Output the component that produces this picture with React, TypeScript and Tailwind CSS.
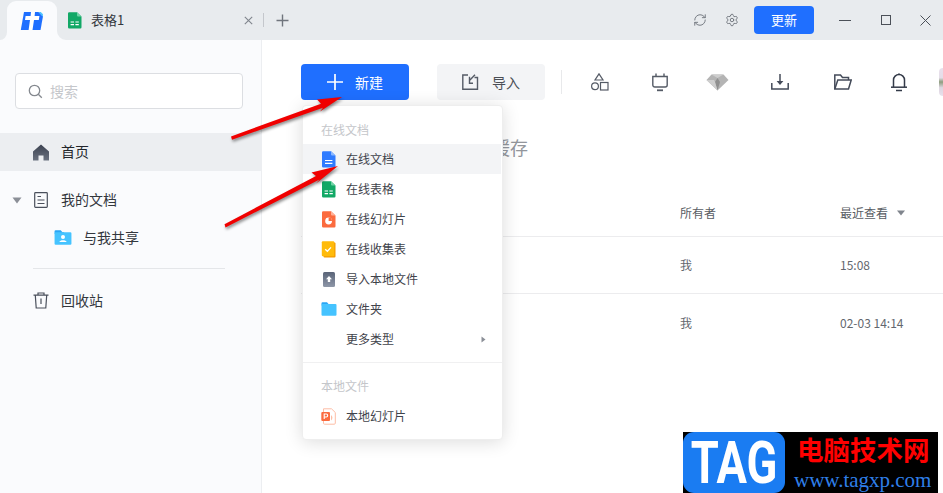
import React from "react";
import { RefreshCw, Settings } from "lucide-react";

const FONT = '"Noto Sans CJK SC", "Liberation Sans", sans-serif';

function AppLogo() {
  return (
    <svg width="24" height="20" viewBox="0 0 24 20">
      <path d="M4 1H18.5L23 5.2L20.5 19H0.8Z" fill="#1f6fff" />
      <path d="M18.5 1H20.8L23 3.2L22.6 5.8Z" fill="#4cc3ff" />
      <path d="M11 1H15L14.6 5H19.4L18.8 9H14L12.5 19H8.6L10 9H5L5.6 5H10.6Z" fill="#fff" />
    </svg>
  );
}

function DocShape({ color, light, children }: { color: string; light: string; children?: React.ReactNode }) {
  return (
    <svg width="15" height="17" viewBox="0 0 15 17">
      <path d="M1 1.5A1.2 1.2 0 0 1 2.2 0.3H10L14.5 4.5V15.3A1.2 1.2 0 0 1 13.3 16.5H2.2A1.2 1.2 0 0 1 1 15.3Z" fill={color} />
      <path d="M10 0.3L14.5 4.5H11A1 1 0 0 1 10 3.5Z" fill={light} />
      {children}
    </svg>
  );
}

function SheetIcon() {
  return (
    <DocShape color="#12a866" light="#6fd3a5">
      <path d="M3.6 10H7M8.4 10H11.8M3.6 12.6H7M8.4 12.6H11.8" stroke="#fff" strokeWidth="1.2" />
    </DocShape>
  );
}

function WordIcon() {
  return (
    <DocShape color="#2f7bff" light="#8bb8ff">
      <path d="M4 9.5H11.4M4 12.3H11.4" stroke="#fff" strokeWidth="1.2" />
    </DocShape>
  );
}

function SlideIcon() {
  return (
    <DocShape color="#fb6b3f" light="#ffb199">
      <circle cx="7.6" cy="10" r="3.4" fill="#fff" />
      <path d="M7.6 10V6.6A3.4 3.4 0 0 1 11 10Z" fill="#fb6b3f" />
    </DocShape>
  );
}

function FormIcon() {
  return (
    <svg width="15" height="17" viewBox="0 0 15 17">
      <rect x="2.5" y="1.5" width="12" height="15" rx="1" fill="#f49b00" />
      <rect x="0.8" y="0.3" width="12.5" height="15" rx="1" fill="#ffbb0b" />
      <path d="M4.2 8.2L6.4 10.3L10 6.4" fill="none" stroke="#fff" strokeWidth="1.3" />
    </svg>
  );
}

function ImportFileIcon() {
  return (
    <svg width="15" height="17" viewBox="0 0 15 17">
      <defs>
        <linearGradient id="imp" x1="0" y1="0" x2="0" y2="1">
          <stop offset="0" stopColor="#5a6478" />
          <stop offset="1" stopColor="#8e97a8" />
        </linearGradient>
      </defs>
      <rect x="2" y="1" width="12" height="15" rx="1.5" fill="url(#imp)" />
      <path d="M8 5L11 8.2H9.2V11H6.8V8.2H5Z" fill="#fff" />
    </svg>
  );
}

function FolderIcon({ w = 16, h = 14, children }: { w?: number; h?: number; children?: React.ReactNode }) {
  return (
    <svg width={w} height={h} viewBox="0 0 16 14" preserveAspectRatio="none">
      <path d="M0.5 1.2A1 1 0 0 1 1.5 0.2H6L7.5 2H9V3.5H0.5Z" fill="#2aa6f5" />
      <path d="M0.5 3A1 1 0 0 1 1.5 2H14.5A1 1 0 0 1 15.5 3V12.8A1 1 0 0 1 14.5 13.8H1.5A1 1 0 0 1 0.5 12.8Z" fill="#45c3ff" />
      {children}
    </svg>
  );
}

function LocalPptIcon() {
  return (
    <svg width="15" height="17" viewBox="0 0 15 17">
      <path d="M2.5 0.8H10.5L14.3 4.5V15.2A1 1 0 0 1 13.3 16.2H3.5A1 1 0 0 1 2.5 15.2Z" fill="#fff" stroke="#fdbda5" strokeWidth="1" />
      <path d="M10 7A3.4 3.4 0 0 1 10 12.5Z" fill="#fdbda5" />
      <rect x="0.3" y="4" width="8.7" height="9" rx="1" fill="#fb6b3f" />
      <path d="M3.2 11V6H5.2A1.5 1.5 0 0 1 5.2 9H3.2" fill="none" stroke="#fff" strokeWidth="1.1" />
    </svg>
  );
}

function MenuRow({ icon, label, active, arrow }: { icon?: React.ReactNode; label: string; active?: boolean; arrow?: boolean }) {
  return (
    <div className={`flex h-[30px] w-[198px] items-center pl-[18px] ${active ? "bg-[#f3f4f6]" : ""}`}>
      <span className="flex w-[25px] shrink-0 items-center">{icon}</span>
      <span className="text-[12px] text-[#3f434b]">{label}</span>
      {arrow && (
        <svg className="ml-auto mr-[15px]" width="5" height="7" viewBox="0 0 5 7">
          <path d="M0.5 0.5L4.5 3.5L0.5 6.5Z" fill="#8b8f97" />
        </svg>
      )}
    </div>
  );
}

export default function App() {
  return (
    <div className="relative flex h-[493px] w-[943px] flex-col overflow-hidden bg-white" style={{ fontFamily: FONT }}>
      {/* Title bar */}
      <header className="flex h-10 shrink-0 items-center bg-[#e8ebee]">
        <div className="relative ml-[7px] flex h-[39px] w-[50px] items-center justify-center self-end rounded-t-[9px] bg-[#fafbfd]">
          <AppLogo />
          <span className="absolute -left-[7px] bottom-0 h-[8px] w-[7px] bg-[#fafbfd] [clip-path:path('M7_0A7_8_0_0_1_0_8H7Z')]" />
          <span className="absolute -right-[9px] bottom-0 h-[9px] w-[9px] bg-[#fafbfd] [clip-path:path('M0_0A9_9_0_0_0_9_9H0Z')]" />
        </div>
        <div className="ml-[10px] flex items-center">
          <SheetIcon />
        </div>
        <span className="ml-[9px] w-[153px] text-[13px] text-[#33373d]">表格1</span>
        <svg className="mr-[10px]" width="9" height="9" viewBox="0 0 9 9">
          <path d="M0.8 0.8L8.2 8.2M8.2 0.8L0.8 8.2" stroke="#80858d" strokeWidth="1.1" />
        </svg>
        <span className="h-[14px] w-[1px] bg-[#c4c7cc]" />
        <svg className="ml-[12px]" width="13" height="13" viewBox="0 0 13 13">
          <path d="M6.5 0.5V12.5M0.5 6.5H12.5" stroke="#70757d" strokeWidth="1.4" />
        </svg>
        <div className="ml-auto flex items-center">
          <RefreshCw size={14} strokeWidth={1.6} color="#70757d" />
          <span className="ml-[18px] flex">
            <Settings size={14} strokeWidth={1.6} color="#70757d" />
          </span>
          <button className="ml-[15px] h-7 w-[60px] rounded-[4px] bg-[#1f6fff] text-[13px] text-white">更新</button>
          <span className="ml-[25px] h-[1px] w-[12px] bg-[#4b5058]" />
          <span className="ml-[30px] h-[10px] w-[10px] border border-[#4b5058]" />
          <svg className="ml-[29px] mr-[12px]" width="11" height="11" viewBox="0 0 11 11">
            <path d="M0.5 0.5L10.5 10.5M10.5 0.5L0.5 10.5" stroke="#4b5058" strokeWidth="1" />
          </svg>
        </div>
      </header>

      <div className="flex min-h-0 flex-1">
        {/* Sidebar */}
        <aside className="w-[262px] shrink-0 border-r border-[#eceef1] bg-[#fafbfd]">
          <div className="mx-[15px] mt-[33px] flex h-9 w-[228px] items-center rounded-[4px] border border-[#dcdee2] bg-white pl-[12px]">
            <svg width="15" height="15" viewBox="0 0 15 15" fill="none" stroke="#85898f" strokeWidth="1.3">
              <circle cx="6.5" cy="6.5" r="5.2" />
              <path d="M10.3 10.3L13.8 13.8" />
            </svg>
            <span className="ml-[7px] text-[14px] text-[#c5c7cb]">搜索</span>
          </div>
          <div className="mt-[24px] flex h-[38px] items-center bg-[#eceef1] pl-[33px]">
            <svg width="16" height="17" viewBox="0 0 16 17">
              <defs>
                <linearGradient id="home" x1="0" y1="0" x2="0" y2="1">
                  <stop offset="0" stopColor="#3b4150" />
                  <stop offset="1" stopColor="#6b7280" />
                </linearGradient>
              </defs>
              <path d="M8 0.5L16 7.5V16.5H10.5V11.5H5.5V16.5H0V7.5Z" fill="url(#home)" />
            </svg>
            <span className="ml-[12px] pb-[2px] text-[14px] text-[#23262b]">首页</span>
          </div>
          <div className="mt-[10px] flex h-[38px] items-center pl-[12px]">
            <svg width="10" height="7" viewBox="0 0 10 7">
              <path d="M0.5 0.5H9.5L5 6.5Z" fill="#8b8f97" />
            </svg>
            <svg className="ml-[12px]" width="14" height="16" viewBox="0 0 14 16" fill="none" stroke="#4a505c" strokeWidth="1.2">
              <rect x="0.7" y="0.7" width="12.6" height="14.6" rx="0.8" />
              <path d="M3.5 4.5H7M3.5 8H10.5M3.5 11.5H10.5" />
            </svg>
            <span className="ml-[13px] pb-[2px] text-[14px] text-[#33373d]">我的文档</span>
          </div>
          <div className="flex h-[37px] items-center pl-[54px]">
            <FolderIcon w={18} h={15}>
              <circle cx="8" cy="6.5" r="1.8" fill="#fff" />
              <path d="M4.8 11.2C5 9 11 9 11.2 11.2Z" fill="#fff" />
            </FolderIcon>
            <span className="ml-[11px] text-[14px] text-[#33373d]">与我共享</span>
          </div>
          <div className="ml-[33px] mt-[12px] h-[1px] w-[192px] bg-[#e4e6e9]" />
          <div className="mt-[12px] flex h-[38px] items-center pl-[33px]">
            <svg width="16" height="17" viewBox="0 0 16 17" fill="none" stroke="#4a505c" strokeWidth="1.2">
              <path d="M0.5 3.2H15.5M5 3V1H11V3M2.3 3.2L3.2 16H12.8L13.7 3.2M8 6.5V12" />
            </svg>
            <span className="ml-[12px] text-[14px] text-[#33373d]">回收站</span>
          </div>
        </aside>

        {/* Main */}
        <main className="min-w-0 flex-1 overflow-hidden">
          <div className="ml-[39px] mt-[24px] flex h-9 items-center">
            <button className="flex h-9 w-[108px] shrink-0 items-center justify-center rounded-[4px] bg-[#1f6fff] text-[14px] text-white">
              <svg width="16" height="16" viewBox="0 0 16 16">
                <path d="M8 0V16M0 8H16" stroke="#fff" strokeWidth="1.7" />
              </svg>
              <span className="ml-[12px]">新建</span>
            </button>
            <button className="ml-[28px] flex h-9 w-[108px] shrink-0 items-center justify-center rounded-[4px] bg-[#f3f4f6] text-[14px] text-[#4a4e55]">
              <svg width="17" height="16" viewBox="0 0 17 16" fill="none" stroke="#555b66" strokeWidth="1.4">
                <path d="M6 1H0.8V15.2H15.5V3.5H12.5" />
                <path d="M13 0.8L7.5 6.5V2.8M7.5 6.5V9.2H11" />
              </svg>
              <span className="ml-[13px]">导入</span>
            </button>
            <span className="ml-[16px] h-[24px] w-[1px] shrink-0 bg-[#e8e9eb]" />
            <span className="ml-[26px] flex w-[24px] shrink-0 justify-center">
              <svg width="18" height="19" viewBox="0 0 18 19" fill="none" stroke="#555b66" strokeWidth="1.2">
                <path d="M8 0.8L12 7H4Z" />
                <circle cx="4" cy="13.2" r="3.4" />
                <rect x="9.5" y="9.5" width="7.5" height="7.5" />
              </svg>
            </span>
            <span className="ml-[36px] flex w-[24px] shrink-0 justify-center">
              <svg width="16" height="19" viewBox="0 0 16 19" fill="none" stroke="#555b66" strokeWidth="1.4">
                <path d="M4 0.5V4M12 0.5V4" />
                <path d="M0.8 3.5H15.2V12A2 2 0 0 1 13.2 14H2.8A2 2 0 0 1 0.8 12Z" />
                <path d="M5 17.3H11" strokeWidth="1.8" />
              </svg>
            </span>
            <span className="ml-[33px] flex w-[24px] shrink-0 justify-center">
              <svg width="23" height="17" viewBox="0 0 23 17">
                <path d="M5.5 0.5H17.5L22.5 6L11.5 16.5L0.5 6Z" fill="#b4b4b4" />
                <path d="M11.5 4L14 8L11.5 16.5L9 8Z" fill="#8f8f8f" />
                <path d="M5.5 0.5L11.5 4L17.5 0.5ZM0.5 6H8L9 8L11.5 16.5Z" fill="#cecece" />
              </svg>
            </span>
            <span className="ml-[39px] flex w-[24px] shrink-0 justify-center">
              <svg width="18" height="16" viewBox="0 0 18 16" fill="none" stroke="#444b59" strokeWidth="1.5">
                <path d="M9 0V9.5" />
                <path d="M5.6 7H12.4L9 11Z" fill="#444b59" strokeWidth="0" />
                <path d="M0.8 9V15H17.2V9" />
              </svg>
            </span>
            <span className="ml-[39px] flex w-[24px] shrink-0 justify-center">
              <svg width="18" height="16" viewBox="0 0 18 16" fill="none" stroke="#444b59" strokeWidth="1.5">
                <path d="M0.8 15V1H6.5L8.5 3.5H14.5V6" />
                <path d="M0.8 15L3.8 6H17.2L14.5 15Z" />
              </svg>
            </span>
            <span className="ml-[32px] flex w-[24px] shrink-0 justify-center">
              <svg width="16" height="19" viewBox="0 0 16 19" fill="none" stroke="#333a48" strokeWidth="1.5">
                <path d="M0 14.2H16" />
                <path d="M2.5 14V7A5.5 5.5 0 0 1 13.5 7V14" />
                <path d="M8 0.5V1.5M5 17.6H11" />
              </svg>
            </span>
            <span className="ml-[28px] h-[28px] w-[16px] shrink-0 rounded-[4px] [background-image:linear-gradient(180deg,#e9e0ec_0%,#e4dde8_35%,#8e9d7e_50%,#dcd6e0_70%,#e9e0ec_100%)]" />
          </div>

          <h2 className="ml-[194px] mt-[35px] text-[18px] font-normal leading-[24px] text-[#93969c]">本地缓存</h2>

          <div className="ml-[39px] mt-[42px] flex h-[36px] items-center border-b border-[#ececee] pb-[11px] text-[12px] text-[#595d64]">
            <span className="w-[379px]" />
            <span className="w-[160px]">所有者</span>
            <span>最近查看</span>
            <svg className="ml-[9px]" width="8" height="6" viewBox="0 0 8 6">
              <path d="M0 0.5H8L4 5.5Z" fill="#80858d" />
            </svg>
          </div>
          <div className="ml-[39px] flex h-[57px] items-center border-b border-[#ececee] text-[12px] text-[#63676e]">
            <span className="w-[379px]" />
            <span className="w-[160px]">我</span>
            <span>15:08</span>
          </div>
          <div className="ml-[39px] flex h-[57px] items-center text-[12px] text-[#63676e]">
            <span className="w-[379px]" />
            <span className="w-[160px]">我</span>
            <span>02-03 14:14</span>
          </div>
        </main>
      </div>

      {/* Dropdown menu */}
      <div className="absolute left-[302px] top-[105px] w-[201px] rounded-[4px] border border-[#eeeeee] bg-white pt-[14px] pb-2 shadow-[0_2px_18px_rgba(0,0,0,0.14)]">
        <div className="flex h-5 items-center pl-[18px] text-[12px] text-[#c4c6ca]">在线文档</div>
        <div className="mt-1">
          <MenuRow active icon={<WordIcon />} label="在线文档" />
          <MenuRow icon={<SheetIcon />} label="在线表格" />
          <MenuRow icon={<SlideIcon />} label="在线幻灯片" />
          <MenuRow icon={<FormIcon />} label="在线收集表" />
          <MenuRow icon={<ImportFileIcon />} label="导入本地文件" />
          <MenuRow icon={<FolderIcon />} label="文件夹" />
          <MenuRow label="更多类型" arrow />
        </div>
        <div className="mt-2 h-[1px] bg-[#f0f0f1]" />
        <div className="mt-[13px] flex h-5 items-center pl-[18px] text-[12px] text-[#c4c6ca]">本地文件</div>
        <div className="mt-[5px]">
          <MenuRow icon={<LocalPptIcon />} label="本地幻灯片" />
        </div>
      </div>

      {/* Annotation arrows */}
      <svg className="pointer-events-none absolute left-0 top-0 [filter:drop-shadow(1px_2px_1.5px_rgba(0,0,0,0.45))]" width="943" height="493" viewBox="0 0 943 493">
        <path d="M231 136.4L321 103.8L317 99.5L342 97L320 111.5L323 107.8L232 139.8Z" fill="#f00000" />
        <path d="M224.5 224.2L316 176L311.5 172.5L338 166L316 183.5L319.5 179.6L225.5 227.4Z" fill="#f00000" />
      </svg>

      {/* Watermark */}
      <div className="absolute left-[683px] top-[432px] flex h-[61px] w-[255px] bg-black">
        <div className="flex h-[61px] w-[102px] shrink-0 items-center justify-center rounded-[11px] bg-[#1a7cf2]">
          <span className="scale-x-[1.03] scale-y-[1.36] whitespace-nowrap text-[44px] font-bold leading-none text-white" style={{ fontFamily: "Roboto, sans-serif" }}>
            TAG
          </span>
        </div>
        <div className="ml-[9px] flex flex-col">
          <span className="ml-[3px] h-[34px] whitespace-nowrap text-[26.5px] font-bold leading-[34px] text-[#ff0000]">电脑技术网</span>
          <span className="mt-[3px] whitespace-nowrap text-[21px] leading-[22px] text-[#2f7fe8]" style={{ fontFamily: '"Liberation Serif", serif' }}>www.tagxp.com</span>
        </div>
      </div>
    </div>
  );
}
